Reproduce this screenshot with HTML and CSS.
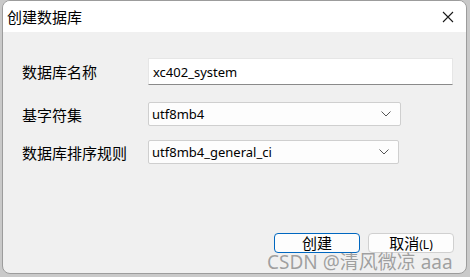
FILE: index.html
```html
<!DOCTYPE html>
<html lang="zh-CN">
<head>
  <meta charset="UTF-8">
  <title>创建数据库</title>
  <link rel="stylesheet" href="styles.css">
</head>
<body>
  <div class="window">
    <div class="titlebar">
      <span class="title">创建数据库</span>
      <button class="close" aria-label="close">
        <svg width="12" height="12" viewBox="0 0 12 12"><path d="M1 1 L11 11 M11 1 L1 11" stroke="#1a1a1a" stroke-width="1.1" fill="none"/></svg>
      </button>
    </div>

    <div class="content">
      <div class="form">
        <div class="row row-name">
          <label>数据库名称</label>
          <div class="field text-field">xc402_system</div>
        </div>
        <div class="row row-charset">
          <label>基字符集</label>
          <div class="field select-field wide">
            <span>utf8mb4</span>
            <svg class="chevron" width="10" height="6" viewBox="0 0 10 6"><path d="M0.5 0.5 L5 5 L9.5 0.5" stroke="#555" stroke-width="1" fill="none"/></svg>
          </div>
        </div>
        <div class="row row-collation">
          <label>数据库排序规则</label>
          <div class="field select-field">
            <span>utf8mb4_general_ci</span>
            <svg class="chevron" width="10" height="6" viewBox="0 0 10 6"><path d="M0.5 0.5 L5 5 L9.5 0.5" stroke="#555" stroke-width="1" fill="none"/></svg>
          </div>
        </div>
      </div>

      <div class="actions">
        <button class="btn primary">创建</button>
        <button class="btn">取消<span class="key">(L)</span></button>
      </div>
    </div>

    <div class="watermark">CSDN @清风微凉 aaa</div>
  </div>
</body>
</html>
```

FILE: styles.css
```css
body {
  margin: 0;
  background-color: #c9c9c9;
  font-family: "Noto Sans", "Noto Sans CJK SC", sans-serif;
  color: #000;
}

.window {
  position: relative;
  width: 463px;
  height: 272px;
  margin-left: 2px;
  border: 1px solid #9c9c9c;
  border-radius: 8px;
  overflow: hidden;
  background-color: #f0f0f0;
  display: flex;
  flex-direction: column;
}

.titlebar {
  height: 31px;
  background-color: #fff;
  display: flex;
  align-items: center;
  justify-content: space-between;
  padding: 0 12px 0 4px;
}

.title {
  font-family: "Noto Sans CJK SC", sans-serif;
  font-size: 15px;
}

.close {
  border: none;
  background: none;
  padding: 0;
  width: 12px;
  height: 12px;
  display: flex;
}

.content {
  flex: 1;
  display: flex;
  flex-direction: column;
  padding: 26px 12px 0 19px;
}

.row {
  display: flex;
  align-items: center;
}

.row label {
  width: 126px;
  font-family: "Noto Sans CJK SC", sans-serif;
  font-size: 15px;
}

.row-charset {
  margin-top: 17px;
}

.row-collation {
  margin-top: 14px;
}

.field {
  box-sizing: border-box;
  background-color: #fff;
  font-size: 13px;
  display: flex;
  align-items: center;
}

.text-field {
  width: 305px;
  height: 27px;
  padding-left: 4px;
  border: 1px solid #e6e6e6;
  border-bottom: 1px solid #8a8a8a;
}

.select-field {
  width: 251px;
  height: 24px;
  padding: 0 9px 0 3px;
  border: 1px solid #cfcfcf;
  border-radius: 2px;
  background-color: #fdfdfd;
  justify-content: space-between;
}

.select-field.wide {
  width: 253px;
}

.actions {
  margin-top: auto;
  margin-bottom: 20px;
  display: flex;
  justify-content: flex-end;
  gap: 8px;
}

.btn {
  box-sizing: border-box;
  width: 86px;
  height: 20px;
  padding: 0;
  border: 1px solid #d0d0d0;
  border-radius: 4px;
  background-color: #fdfdfd;
  font-family: "Noto Sans CJK SC", sans-serif;
  font-size: 15px;
  line-height: 18px;
  color: #000;
}

.btn.primary {
  border-color: #0067c0;
}

.key {
  font-family: "Noto Sans", sans-serif;
  font-size: 12px;
}

.watermark {
  position: absolute;
  left: 264px;
  top: 246px;
  font-family: "Noto Sans", "Noto Sans CJK SC", sans-serif;
  font-size: 19px;
  color: rgba(105, 105, 105, 0.6);
  white-space: nowrap;
}
```
